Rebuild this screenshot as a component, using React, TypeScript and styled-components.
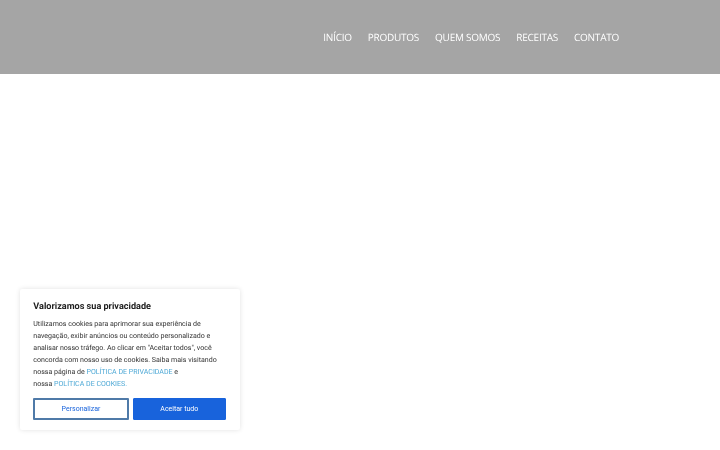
import React from "react";
import styled, { createGlobalStyle } from "styled-components";

const GlobalStyle = createGlobalStyle`
  html, body {
    margin: 0;
    padding: 0;
    background: #ffffff;
    text-rendering: geometricPrecision;
  }
`;

const Page = styled.div`
  width: 720px;
  height: 450px;
  overflow: hidden;
  background: #ffffff;
  filter: blur(0.35px);
`;

const Header = styled.header`
  height: 74px;
  background: #a5a5a5;
  display: flex;
  justify-content: flex-end;
  padding: 0 101px 1px 0;
  box-sizing: border-box;
`;

const Nav = styled.nav`
  display: flex;
  align-items: center;
  gap: 16px;
`;

const NavLink = styled.a`
  font-family: "Open Sans", sans-serif;
  font-size: 10px;
  letter-spacing: -0.25px;
  color: #ffffff;
  text-transform: uppercase;
  text-decoration: none;
  white-space: nowrap;
`;

const Banner = styled.aside`
  position: fixed;
  left: 20px;
  bottom: 20px;
  width: 220px;
  height: 141px;
  box-sizing: border-box;
  padding: 11.5px 14px 0 13.3px;
  background: #ffffff;
  border-radius: 2px;
  box-shadow: 0 0 5px rgba(0, 0, 0, 0.12);
  font-family: Roboto, sans-serif;
`;

const BannerTitle = styled.h2`
  margin: 0 0 5.5px;
  font-size: 9.1px;
  line-height: 12px;
  font-weight: 700;
  color: #212121;
`;

const BannerText = styled.p`
  margin: 0;
  font-size: 7.05px;
  line-height: 12px;
  color: #333333;
`;

const PolicyLink = styled.a`
  color: #4fa9d6;
  text-decoration: none;
`;

const Actions = styled.div`
  display: flex;
  gap: 4px;
  margin-top: 7.5px;
`;

const Action = styled.button<{ $primary?: boolean }>`
  flex: 1;
  height: 22px;
  padding: 0;
  box-sizing: border-box;
  border-radius: 1px;
  border: ${(props) => (props.$primary ? "1px solid #1863dc" : "2px solid #4f7aa8")};
  background: ${(props) => (props.$primary ? "#1863dc" : "#ffffff")};
  color: ${(props) => (props.$primary ? "#ffffff" : "#1863dc")};
  font-family: Roboto, sans-serif;
  font-size: 7px;
`;

const links = ["Início", "Produtos", "Quem somos", "Receitas", "Contato"];

const App = () => {
  return (
    <Page>
      <GlobalStyle />
      <Header>
        <Nav>
          {links.map((link) => (
            <NavLink key={link} href="#">
              {link}
            </NavLink>
          ))}
        </Nav>
      </Header>
      <Banner>
        <BannerTitle>Valorizamos sua privacidade</BannerTitle>
        <BannerText>
          Utilizamos cookies para aprimorar sua experiência de
          <br />
          navegação, exibir anúncios ou conteúdo personalizado e
          <br />
          analisar nosso tráfego. Ao clicar em "Aceitar todos", você
          <br />
          concorda com nosso uso de cookies. Saiba mais visitando
          <br />
          nossa página de{" "}
          <PolicyLink href="#">POLÍTICA DE PRIVACIDADE</PolicyLink> e
          <br />
          nossa <PolicyLink href="#">POLÍTICA DE COOKIES.</PolicyLink>
        </BannerText>
        <Actions>
          <Action>Personalizar</Action>
          <Action $primary>Aceitar tudo</Action>
        </Actions>
      </Banner>
    </Page>
  );
};

export default App;
